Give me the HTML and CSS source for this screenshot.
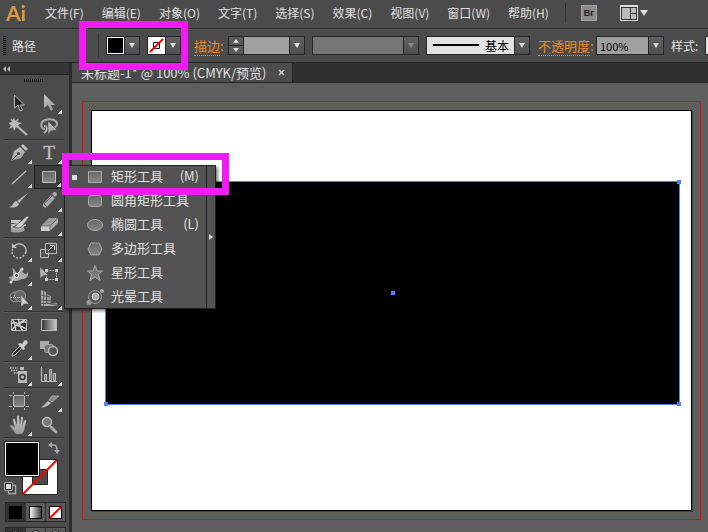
FILE: index.html
```html
<!DOCTYPE html>
<html lang="zh-CN">
<head>
  <meta charset="UTF-8">
  <meta name="viewport" content="width=device-width, initial-scale=1.0">
  <title>未标题-1* @ 100% (CMYK/预览)</title>
  <link rel="stylesheet" href="styles.css">
</head>
<body>
  <!-- shared gradients for the tool icons -->
  <svg class="defs" aria-hidden="true">
    <defs>
      <linearGradient id="shade" x1="0" y1="0" x2="0" y2="1"><stop offset="0" stop-color="#666"/><stop offset="1" stop-color="#888"/></linearGradient>
      <linearGradient id="silver" x1="0" y1="0" x2="0" y2="1"><stop offset="0" stop-color="#c8c8c8"/><stop offset="1" stop-color="#999"/></linearGradient>
      <linearGradient id="ramp"><stop offset="0" stop-color="#333"/><stop offset="1" stop-color="#ccc"/></linearGradient>
      <linearGradient id="ramp-light"><stop offset="0" stop-color="#fff"/><stop offset="1" stop-color="#333"/></linearGradient>
    </defs>
  </svg>

  <div class="app">
    <header class="menubar">
      <div class="logo">Ai</div>
      <nav class="menus">
        <button>文件(F)</button>
        <button>编辑(E)</button>
        <button>对象(O)</button>
        <button>文字(T)</button>
        <button>选择(S)</button>
        <button>效果(C)</button>
        <button>视图(V)</button>
        <button>窗口(W)</button>
        <button>帮助(H)</button>
      </nav>
      <span class="menu-divider"></span>
      <button class="bridge">Br</button>
      <button class="arrange" aria-label="排列文档">
        <svg width="28" height="16" viewBox="0 0 28 16"><path fill="#ddd" d="M0 0h18v16H0z"/><path fill="#333" d="M1 2h16v13H1z"/><path fill="#bbb" d="M2 3h8v11H2zM11 3h5v5h-5zM11 9h5v5h-5z"/><path fill="#ddd" d="M20 5h8l-4 6z"/></svg>
      </button>
    </header>

    <div class="controlbar">
      <span class="grip"></span>
      <span class="selection-type">路径</span>
      <span class="bar-divider"></span>
      <button class="swatch-picker" aria-label="填色"><span class="swatch swatch-fill"></span><span class="arrow"></span></button>
      <button class="swatch-picker" aria-label="描边颜色">
        <span class="swatch"><svg width="17" height="17" viewBox="0 0 17 17"><path fill="#fff" d="M0 0h17v17H0z"/><path fill="none" stroke="#111" d="M5.500 5.500h6v6h-6z"/><path stroke="#f00" stroke-width="2" d="M2 15 15 2"/></svg></span><span class="arrow"></span>
      </button>
      <a class="panel-link stroke-link" href="#stroke"><u>描边</u>:</a>
      <div class="combo combo-weight">
        <span class="stepper"><button aria-label="增加"></button><button aria-label="减少"></button></span>
        <input type="text" aria-label="描边粗细">
        <button class="arrow" aria-label="粗细列表"></button>
      </div>
      <div class="combo combo-profile">
        <select aria-label="变量宽度配置文件" disabled><option></option></select>
        <span class="arrow"></span>
      </div>
      <div class="combo combo-brush">
        <select aria-label="画笔定义"><option>基本</option></select>
        <span class="arrow"></span>
      </div>
      <a class="panel-link opacity-link" href="#opacity"><u>不透明度</u>:</a>
      <div class="combo combo-opacity">
        <input type="text" value="100%" aria-label="不透明度">
        <button class="arrow" aria-label="不透明度列表"></button>
      </div>
      <label class="style-label" for="graphicStyle">样式:</label>
      <div class="combo combo-style"><select id="graphicStyle"><option></option></select></div>
    </div>

    <div class="workspace">
      <aside class="toolbox">
        <button class="collapse" aria-label="折叠">
          <svg width="8" height="6" viewBox="0 0 8 6"><path fill="#bbb" d="M3 0v6L0 3zM7 0v6L4 3z"/></svg>
        </button>
        <div class="toolbox-grip"></div>

        <div class="tools">
          <button class="tool" aria-label="选择"><svg viewBox="0 0 20 20"><path fill="#222" stroke="#bbb" d="M5.500 2v13l3.500-3 2 6 2.500-1-2.500-5h4.500z"/></svg></button>
          <button class="tool more" aria-label="直接选择"><svg viewBox="0 0 20 20"><path fill="url(#silver)" d="M5 1v14l4-3 3 6 2-1-2-5h4z"/></svg></button>
          <button class="tool" aria-label="魔棒"><svg viewBox="0 0 20 20"><path fill="#bbb" d="m5 0 1 4 4-3-2 4 5 1-4 2 2 4-4-2-2 4-1-4-4 2 2-4-3-2 4-1-2-4 3 2z"/><path stroke="#bbb" stroke-width="2" d="m8 9 10 9"/></svg></button>
          <button class="tool" aria-label="套索"><svg viewBox="0 0 20 20"><path fill="none" stroke="#aaa" stroke-width="2" d="M6 12C1 11 1 5 6 3c6-2 12 0 12 4 0 2-2 4-5 4M5 9c3 0 4 3 2 5l-2 2"/><path fill="url(#silver)" stroke="#444" stroke-width=".5" d="M9 4v14l3-4 6-1z"/></svg></button>
        </div>
        <div class="tools">
          <button class="tool more" aria-label="钢笔"><svg viewBox="0 0 20 20"><path fill="url(#silver)" d="m2 18 3-10 6-4 5 5-4 6zM12 3l2-2 5 5-2 2z"/><path stroke="#444" d="m3 17 6-6"/><circle cx="9.500" cy="10.500" r="1.500" fill="#444"/></svg></button>
          <button class="tool more" aria-label="文字"><svg viewBox="0 0 20 20"><text x="10" y="16" text-anchor="middle" font-family="Liberation Serif, serif" font-size="19" fill="#bbb" stroke="#bbb" stroke-width=".4">T</text></svg></button>
          <button class="tool more" aria-label="直线段"><svg viewBox="0 0 20 20"><path stroke="#bbb" stroke-width="1.300" d="M3 17 17 4"/></svg></button>
          <button class="tool more active" aria-label="矩形"><svg viewBox="0 0 20 20"><path fill="url(#shade)" stroke="#bbb" d="M3.500 4.500h13v11h-13z"/></svg></button>
          <button class="tool" aria-label="画笔"><svg viewBox="0 0 20 20"><path fill="#bbb" d="m19 2-9 10-2-2zM7 10l3 3c-2 4-6 4-10 3 4 0 4-5 7-6z"/></svg></button>
          <button class="tool more" aria-label="铅笔"><svg viewBox="0 0 20 20"><path fill="#aaa" d="m3 18 1-5 8-9 4 3-8 9zM13 3l2-2c2 0 3 1 3 3l-2 2z"/><path stroke="#555" d="m5 13 8-8M5 13l3 3"/><path fill="#333" d="m3 18 .7-3 2 2z"/></svg></button>
          <button class="tool" aria-label="斑点画笔"><svg viewBox="0 0 20 20"><path fill="url(#silver)" d="M2 5h10l-3 4c-2 1-3 2-5 3 4 1 7 1 9-2l4-1v2c-3 0-3 2-1 4-3 3-9 3-14 2V9c2 0 4 0 5-1H2z"/><path fill="#ccc" stroke="#444" stroke-width=".6" d="M4 12c4 0 3-3 6-4l8-7 2 1-6 8c-3 4-6 3-10 2z"/></svg></button>
          <button class="tool more" aria-label="橡皮擦"><svg viewBox="0 0 20 20"><path fill="#999" d="m10 3h9l-8 8H2z"/><path fill="#ccc" d="M2 11h9v5H2z"/><path fill="#aaa" d="m11 11 8-8v5l-8 8z"/><path fill="none" stroke="#555" stroke-width=".7" d="M2 11h9l8-8M11 11v5"/></svg></button>
        </div>
        <div class="tools">
          <button class="tool more" aria-label="旋转"><svg viewBox="0 0 20 20"><path fill="none" stroke="#bbb" stroke-width="1.500" d="M5 5c7-6 15 2 11 8"/><path fill="none" stroke="#bbb" stroke-width="1.500" stroke-dasharray="2 1.500" d="M15 14c-5 7-15 1-11-7"/><path fill="#bbb" d="M3 2v5h5z"/></svg></button>
          <button class="tool more" aria-label="比例缩放"><svg viewBox="0 0 20 20"><path fill="#555" stroke="#bbb" d="M1.500 8.500h8v8h-8z"/><path fill="#444" fill-opacity=".6" stroke="#bbb" d="M6.500 2.500h11v10h-11z"/><path fill="none" stroke="#ddd" d="m9 10 5-5M11 4.500h4.500V9"/></svg></button>
          <button class="tool more" aria-label="宽度"><svg viewBox="0 0 20 20"><path fill="#aaa" d="M3 3c4 1 3 5 5 5 3 0 2-5 6-5-2 3 0 5 2 6 2 0 3-1 3-3 1 4-1 8-5 8-3 0-4 2-7 2-4 0-7-2-7-4 3 0 4-1 4-3 0-3 0-4-1-6z"/><path stroke="#ddd" d="m2 17 11-13"/><circle cx="7.500" cy="10.500" r="2" fill="#444" stroke="#fff"/><circle cx="2" cy="17" r="1.500" fill="#ddd"/><circle cx="13" cy="4" r="1.500" fill="#ddd"/></svg></button>
          <button class="tool" aria-label="自由变换"><svg viewBox="0 0 20 20"><path fill="none" stroke="#bbb" stroke-dasharray="2 1" d="M7.500 5.500h10v9h-10z"/><path fill="#ccc" d="M6 4h3v3H6zM16 4h3v3h-3zM16 13h3v3h-3zM6 13h3v3H6z"/><path fill="url(#silver)" stroke="#444" stroke-width=".5" d="M1 2v12l3-3 5-1z"/></svg></button>
          <button class="tool more" aria-label="形状生成器"><svg viewBox="0 0 20 20"><circle cx="6" cy="8" r="5" fill="#555" stroke="#999"/><circle cx="11" cy="7" r="5.500" fill="#666" stroke="#999"/><path stroke="#fff" stroke-dasharray="1 1" d="M2 8.500h11"/><path fill="#ccc" stroke="#444" stroke-width=".5" d="M12 6v12l3-3 5 0z"/></svg></button>
          <button class="tool more" aria-label="透视网格"><svg viewBox="0 0 20 20"><path fill="#aaa" d="M2 1l5 2v11l11 3H2z"/><path fill="#999" d="m8 5 4 2v7H8zM9 15l9-1v3z"/><path fill="none" stroke="#444" stroke-width=".7" d="M4.500 1v16M2 6l9 2M2 11l11 1M7 14l11 2M2 14.500h5"/></svg></button>
        </div>
        <div class="tools">
          <button class="tool" aria-label="网格"><svg viewBox="0 0 20 20"><path fill="#333" stroke="#bbb" d="M2.500 4.500h15v11h-15z"/><path fill="none" stroke="#ccc" stroke-width="1.500" d="M2 9c5-4 6 1 8 0s4-4 8-1M6 16c2-4-1-7-2-11M9 4c2 3 1 8 5 12M3 15c3-5 7-7 13-10M8 11c4-1 6 1 9 3"/></svg></button>
          <button class="tool" aria-label="渐变"><svg viewBox="0 0 20 20"><path fill="url(#ramp)" stroke="#bbb" d="M2.500 4.500h15v11h-15z"/></svg></button>
          <button class="tool more" aria-label="吸管"><svg viewBox="0 0 20 20"><path fill="#333" stroke="#bbb" d="M3 17c0-3 2-4 8-10l2 2C7 15 6 17 3 17z"/><path fill="#ccc" d="m9 5 2-1 2 1 2-3c2-2 5 1 3 3l-3 3 1 2-2 1z"/></svg></button>
          <button class="tool" aria-label="混合"><svg viewBox="0 0 20 20"><path fill="#aaa" d="M1 2h9v8H1z"/><rect x="5.500" y="5.500" width="9" height="8" rx="2" fill="#777" stroke="#aaa"/><circle cx="14" cy="12" r="4.500" fill="#555" stroke="#bbb" stroke-width="1.500"/></svg></button>
        </div>
        <div class="tools">
          <button class="tool more" aria-label="符号喷枪"><svg viewBox="0 0 20 20"><path fill="#bbb" d="M11 2h4v3h-4zM9 6h9v12H9z"/><circle cx="13.500" cy="12" r="2.500" fill="#bbb" stroke="#333" stroke-width="1.500"/><path stroke="#bbb" stroke-width="1.500" stroke-dasharray="1.500 1" d="M1 3h8M2 5.500h7M5 8h4"/></svg></button>
          <button class="tool more" aria-label="柱形图"><svg viewBox="0 0 20 20"><path fill="none" stroke="#bbb" stroke-width="1.200" d="M2.500 2v14.500H18"/><path fill="#777" stroke="#bbb" d="M5.500 9.500h2v6h-2zM10.500 4.500h2v11h-2zM14.500 8.500h2v7h-2z"/></svg></button>
        </div>
        <div class="tools">
          <button class="tool" aria-label="画板"><svg viewBox="0 0 20 20"><path fill="url(#shade)" d="M5 5h10v10H5z"/><path stroke="#bbb" d="M0 4.500h3M5 4.500h10M17 4.500h3M0 15.500h3M5 15.500h10M17 15.500h3M4.500 1v2M4.500 5v10M4.500 17v2M15.500 1v2M15.500 5v10M15.500 17v2"/></svg></button>
          <button class="tool more" aria-label="切片"><svg viewBox="0 0 20 20"><path fill="#bbb" d="m2 17 7-7 3 2c-3 3-6 4-10 5z"/><path fill="#888" stroke="#bbb" stroke-width=".7" d="m10 9 3-4h7l-7 6z"/></svg></button>
          <button class="tool more" aria-label="抓手"><svg viewBox="0 0 20 20"><path fill="url(#silver)" d="M7 19 1 11c1-1 2-1 3 0l2 2L4 5c0-2 2-2 2 0l2 5V2c0-2 2-2 2 0l1 8 1-7c0-2 2-1 2 0l-1 8 2-5c1-2 3-1 2 1l-2 9-2 3z"/></svg></button>
          <button class="tool" aria-label="缩放"><svg viewBox="0 0 20 20"><circle cx="8" cy="7" r="4.500" fill="#777" stroke="#bbb" stroke-width="1.500"/><path stroke="#aaa" stroke-width="3" stroke-linecap="round" d="m12 12 5 5"/></svg></button>
        </div>

        <div class="paint">
          <svg width="60" height="60" viewBox="0 0 60 60">
            <path fill="#fff" stroke="#222" d="M18.500 20.500h35v35h-35z"/>
            <path fill="#4b4b4b" stroke="#222" d="M28.500 30.500h15v15h-15z"/>
            <path stroke="#f00" stroke-width="2" d="M19 55 53 21"/>
            <path fill="#000" stroke="#222" d="M.5 2.500h35v35H.5z"/>
            <path fill="#000" stroke="#fff" d="M1.500 3.500h33v33h-33z"/>
            <path fill="none" stroke="#aaa" stroke-width="1.500" d="M46 6h3c3 0 4 1 4 6"/>
            <path fill="#aaa" d="m44 6 4-3v6zM53 15l-3-4h6z"/>
            <path fill="#333" stroke="#aaa" stroke-width="1.500" d="M4.500 46.500h7v8h-7z"/>
            <path fill="#ddd" stroke="#111" d="M1.500 44.500h6v6h-6z"/>
            <path fill="none" stroke="#aaa" d="M.5 51.500v-8h8v8z"/>
          </svg>
        </div>
        <div class="paint-modes">
          <button aria-label="颜色"><svg viewBox="0 0 13 13"><path d="M0 0h13v13H0z"/></svg></button>
          <button aria-label="渐变填色"><svg viewBox="0 0 13 13"><path fill="url(#ramp-light)" stroke="#000" d="M.5.5h12v12H.5z"/></svg></button>
          <button aria-label="无"><svg viewBox="0 0 13 13"><path fill="#fff" stroke="#000" d="M.5.5h12v12H.5z"/><path stroke="#f00" stroke-width="2" d="M1 12 12 1"/></svg></button>
        </div>
        <div class="paint-modes draw-modes">
          <button aria-label="正常绘图"><svg viewBox="0 0 13 13"><circle cx="6.500" cy="6.500" r="5" fill="#666" stroke="#111"/></svg></button>
          <button aria-label="背面绘图"><svg viewBox="0 0 13 13"><circle cx="6.500" cy="6.500" r="5" fill="#999" stroke="#222"/></svg></button>
          <button aria-label="内部绘图"><svg viewBox="0 0 13 13"><circle cx="6.500" cy="6.500" r="5" fill="#999" stroke="#222"/></svg></button>
        </div>
      </aside>

      <main class="document">
        <div class="tabs">
          <div class="tab"><span>未标题-1* @ 100% (CMYK/预览)</span><button aria-label="关闭"><svg width="7" height="7" viewBox="0 0 7 7"><path stroke="#ccc" stroke-width="1.500" d="m1 1 5 5M6 1 1 6"/></svg></button></div>
        </div>
        <div class="canvas">
          <div class="bleed">
            <div class="artboard">
              <div class="shape">
                <i class="handle tr"></i>
                <i class="handle bl"></i>
                <i class="handle br"></i>
                <i class="handle center"></i>
              </div>
            </div>
          </div>
        </div>
      </main>
    </div>

    <!-- rectangle tool flyout -->
    <div class="flyout">
      <div class="flyout-list">
        <button class="current"><svg viewBox="0 0 20 20"><path fill="url(#shade)" stroke="#aaa" d="M3.500 4.500h13v11h-13z"/></svg><span>矩形工具</span><kbd>(M)</kbd></button>
        <button><svg viewBox="0 0 20 20"><rect x="3.500" y="4.500" width="13" height="11" rx="3" fill="url(#shade)" stroke="#aaa"/></svg><span>圆角矩形工具</span></button>
        <button><svg viewBox="0 0 20 20"><ellipse cx="10" cy="10" rx="7.500" ry="5.500" fill="url(#shade)" stroke="#aaa"/></svg><span>椭圆工具</span><kbd>(L)</kbd></button>
        <button><svg viewBox="0 0 20 20"><path fill="url(#shade)" stroke="#aaa" d="m3 10 3-6h8l3 6-3 6H6z"/></svg><span>多边形工具</span></button>
        <button><svg viewBox="0 0 20 20"><path fill="url(#shade)" stroke="#aaa" d="m10 2.500 2 5.500h5.500l-4 3.500 1.500 6-5-3.500-5 3.500 1.500-6-4-3.500H8z"/></svg><span>星形工具</span></button>
        <button><svg viewBox="0 0 20 20"><circle cx="10" cy="10" r="6.500" fill="#555" stroke="#999"/><circle cx="10.500" cy="9.500" r="3.500" fill="#aaa" stroke="#ccc"/><circle cx="17" cy="4" r="2" fill="#aaa"/><circle cx="4" cy="15.500" r="2.500" fill="#999"/></svg><span>光晕工具</span></button>
      </div>
      <button class="tearoff" aria-label="拖出"><svg width="4" height="6" viewBox="0 0 4 6"><path fill="#ddd" d="M0 0v6l4-3z"/></svg></button>
    </div>

    <!-- callouts -->
    <div class="callout callout-paint"></div>
    <div class="callout callout-rect"></div>
  </div>
</body>
</html>
```
FILE: styles.css
```css
* {
  box-sizing: border-box;
}

body {
  margin: 0;
  background: #5e5e5e;
  color: #e0e0e0;
  font-family: "Noto Sans CJK SC", sans-serif;
  font-size: 12px;
}

button,
input,
select {
  margin: 0;
  padding: 0;
  border: 0;
  border-radius: 0;
  background: none;
  color: inherit;
  font: inherit;
}

svg {
  display: block;
  flex: none;
}

.defs {
  position: absolute;
  width: 0;
  height: 0;
}

.app {
  position: relative;
  display: flex;
  flex-direction: column;
  height: 100vh;
  overflow: hidden;
}

/* menu bar */
.menubar {
  display: flex;
  flex: none;
  align-items: center;
  height: 29px;
  padding-left: 6px;
  padding-bottom: 3px;
  background: #4b4b4b;
  border-bottom: 1px solid #262626;
}

.logo {
  align-self: flex-start;
  width: 39px;
  color: #d9993d;
  font: bold 21px/25px Lato, sans-serif;
}

.menus {
  display: flex;
  gap: 18px;
}

.menus button {
  white-space: nowrap;
  line-height: 18px;
}

.menu-divider {
  width: 1px;
  height: 20px;
  margin: 0 15px 0 16px;
  background: #333;
}

.bridge {
  width: 16px;
  height: 16px;
  background: #8a8a8a;
  border: 1px solid #a5a5a5;
  color: #222;
  font: bold 9px/14px "Liberation Sans", sans-serif;
}

.arrange {
  margin-left: 23px;
}

/* control bar */
.controlbar {
  display: flex;
  flex: none;
  align-items: center;
  height: 34px;
  padding: 0 0 1px 3px;
  background: #4b4b4b;
  border-top: 1px solid #555;
  border-bottom: 1px solid #262626;
  white-space: nowrap;
  overflow: hidden;
}

.controlbar > * {
  flex: none;
}

.grip {
  width: 3px;
  height: 20px;
  margin-right: 6px;
  background: repeating-linear-gradient(#111 0 1px, #4b4b4b 1px 2px);
}

.bar-divider {
  width: 1px;
  height: 25px;
  margin: 0 7px 0 62px;
  background: #333;
}

.swatch-picker {
  display: flex;
  height: 19px;
  margin-right: 7px;
  border: 1px solid #262626;
}

.swatch {
  width: 17px;
  height: 17px;
  background: #fff;
}

.swatch-fill {
  background: #000;
  border: 1px solid #fff;
}

/* drop-down arrow cell */
.arrow {
  position: relative;
  flex: none;
  width: 15px;
  height: 17px;
  background: linear-gradient(#626262, #4f4f4f);
  border-left: 1px solid #262626;
}

.arrow::after {
  content: "";
  position: absolute;
  left: 4px;
  top: 6px;
  border: 3px solid transparent;
  border-top: 5px solid #ddd;
  border-bottom: 0;
}

.panel-link {
  color: #f08c28;
  font-size: 13px;
  line-height: 18px;
  text-decoration: none;
}

.panel-link u {
  text-decoration: none;
  border-bottom: 1px dotted #f08c28;
}

.stroke-link {
  width: 34px;
  margin-left: 6px;
}

.opacity-link {
  width: 58px;
}

.combo {
  display: flex;
  height: 19px;
  margin-right: 7px;
  border: 1px solid #262626;
  color: #000;
}

.combo input,
.combo select {
  flex: 1;
  min-width: 0;
  height: 17px;
  appearance: none;
  background: #a0a0a0;
  opacity: 1;
}

.combo-weight {
  width: 77px;
}

.stepper {
  display: flex;
  flex-direction: column;
  width: 15px;
  border-right: 1px solid #262626;
}

.stepper button {
  position: relative;
  flex: 1;
  background: #5a5a5a;
}

.stepper button + button {
  border-top: 1px solid #262626;
}

.stepper button::after {
  content: "";
  position: absolute;
  left: 4px;
  top: 2px;
  border: 3px solid transparent;
  border-bottom: 4px solid #ddd;
  border-top: 0;
}

.stepper button + button::after {
  border-top: 4px solid #ddd;
  border-bottom: 0;
}

.combo-profile {
  width: 107px;
}

.combo-profile select {
  background: #757575;
}

.combo-profile .arrow::after {
  border-top-color: #888;
}

.combo-brush {
  width: 104px;
  margin-right: 8px;
}

.combo-brush select {
  padding-left: 58px;
  background: linear-gradient(#000, #000) 6px 7px / 46px 2px no-repeat #e2e2e2;
}

.combo-opacity {
  width: 68px;
}

.combo-opacity input {
  padding-left: 3px;
  font-size: 11px;
}

.style-label {
  width: 34px;
}

.combo-style {
  width: 60px;
}

.combo-style select {
  background: #e2e2e2;
}

/* toolbox */
.workspace {
  display: flex;
  flex: 1;
  min-height: 0;
}

.toolbox {
  flex: none;
  width: 72px;
  background: #4b4b4b;
  border-right: 3px solid #2b2b2b;
  overflow: hidden;
}

.collapse {
  display: flex;
  align-items: center;
  width: 100%;
  height: 12px;
  padding-left: 3px;
  background: #333;
  border-bottom: 1px solid #222;
}

.toolbox-grip {
  width: 20px;
  height: 3px;
  margin: 4px 0 9px 24px;
  background: repeating-linear-gradient(90deg, #111 0 1px, #4b4b4b 1px 2px);
}

.tools {
  display: grid;
  grid-template-columns: 30px 30px;
  grid-auto-rows: 24px;
  width: 60px;
  margin: 0 0 1px 4px;
  border-bottom: 1px solid #333;
  box-shadow: 0 1px #585858;
}

.tool {
  position: relative;
  display: flex;
  align-items: center;
  justify-content: center;
}

.tool svg {
  width: 20px;
  height: 20px;
}

.tool.active {
  background: #3c3c3c;
  border: 1px solid #222;
}

/* corner mark: tool has a flyout */
.more::after {
  content: "";
  position: absolute;
  right: 2px;
  bottom: 1px;
  width: 4px;
  height: 4px;
  background: linear-gradient(135deg, transparent 50%, #ddd 50%);
}

.paint {
  margin-left: 4px;
}

.paint-modes {
  display: flex;
  width: 61px;
  margin: 3px 0 5px 5px;
  border: 1px solid #262626;
}

.paint-modes button {
  display: flex;
  align-items: center;
  justify-content: center;
  flex: 1;
  height: 18px;
  background: #5a5a5a;
}

.paint-modes button + button {
  border-left: 1px solid #333;
}

.paint-modes button:first-child {
  background: #333;
}

.paint-modes svg {
  width: 13px;
  height: 13px;
}

.draw-modes button {
  height: 14px;
}

/* document window */
.document {
  display: flex;
  flex: 1;
  flex-direction: column;
  min-width: 0;
}

.tabs {
  display: flex;
  height: 20px;
  background: #2f2f2f;
  border-bottom: 1px solid #262626;
}

.tab {
  display: flex;
  align-items: center;
  gap: 12px;
  padding: 0 7px 0 9px;
  background: #4b4b4b;
  border-right: 1px solid #222;
  font-size: 13px;
  line-height: 19px;
  white-space: nowrap;
}

.canvas {
  display: flex;
  flex: 1;
  padding: 18px 7px 12px 10px;
}

.bleed {
  display: flex;
  flex: 1;
  padding: 8px;
  border: 1px solid #f00;
}

.artboard {
  display: flex;
  flex: 1;
  padding: 70px 11px 105px 13px;
  background: #fff;
  border: 1px solid #000;
  box-shadow: 1px 1px #444;
}

.shape {
  position: relative;
  flex: 1;
  background: #000;
  border: 1px solid #4f80ff;
}

.handle {
  position: absolute;
  width: 4px;
  height: 4px;
  background: #4f80ff;
}

.tr {
  top: -2px;
  right: -2px;
}

.bl {
  bottom: -2px;
  left: -2px;
}

.br {
  right: -2px;
  bottom: -2px;
}

.center {
  top: 50%;
  left: 50%;
  margin: -2px;
}

/* flyout menu */
.flyout {
  position: absolute;
  left: 64px;
  top: 165px;
  display: flex;
  width: 152px;
  height: 144px;
  background: #535353;
  border: 1px solid #222;
  box-shadow: 2px 2px 3px rgba(0, 0, 0, 0.5);
}

.flyout-list {
  flex: 1;
  margin: -1px 0;
}

.flyout-list button {
  position: relative;
  display: flex;
  align-items: center;
  width: 100%;
  height: 24px;
  padding-left: 20px;
  font-size: 13px;
  line-height: 18px;
  white-space: nowrap;
}

.flyout-list svg {
  width: 20px;
  height: 20px;
  margin-right: 6px;
}

.flyout-list span,
.flyout-list kbd {
  padding-bottom: 2px;
}

.flyout-list kbd {
  margin: 0 7px 0 auto;
  font-family: inherit;
}

.flyout-list .current::before {
  content: "";
  position: absolute;
  left: 7px;
  top: 10px;
  width: 5px;
  height: 5px;
  background: #ddd;
}

.tearoff {
  display: flex;
  align-items: center;
  justify-content: center;
  width: 9px;
  border-left: 1px solid #222;
}

/* magenta callouts */
.callout {
  position: absolute;
  border: 7px solid #f31bf3;
  pointer-events: none;
}

.callout-paint {
  left: 79px;
  top: 21px;
  width: 109px;
  height: 49px;
}

.callout-rect {
  left: 62px;
  top: 153px;
  width: 167px;
  height: 42px;
}
```
